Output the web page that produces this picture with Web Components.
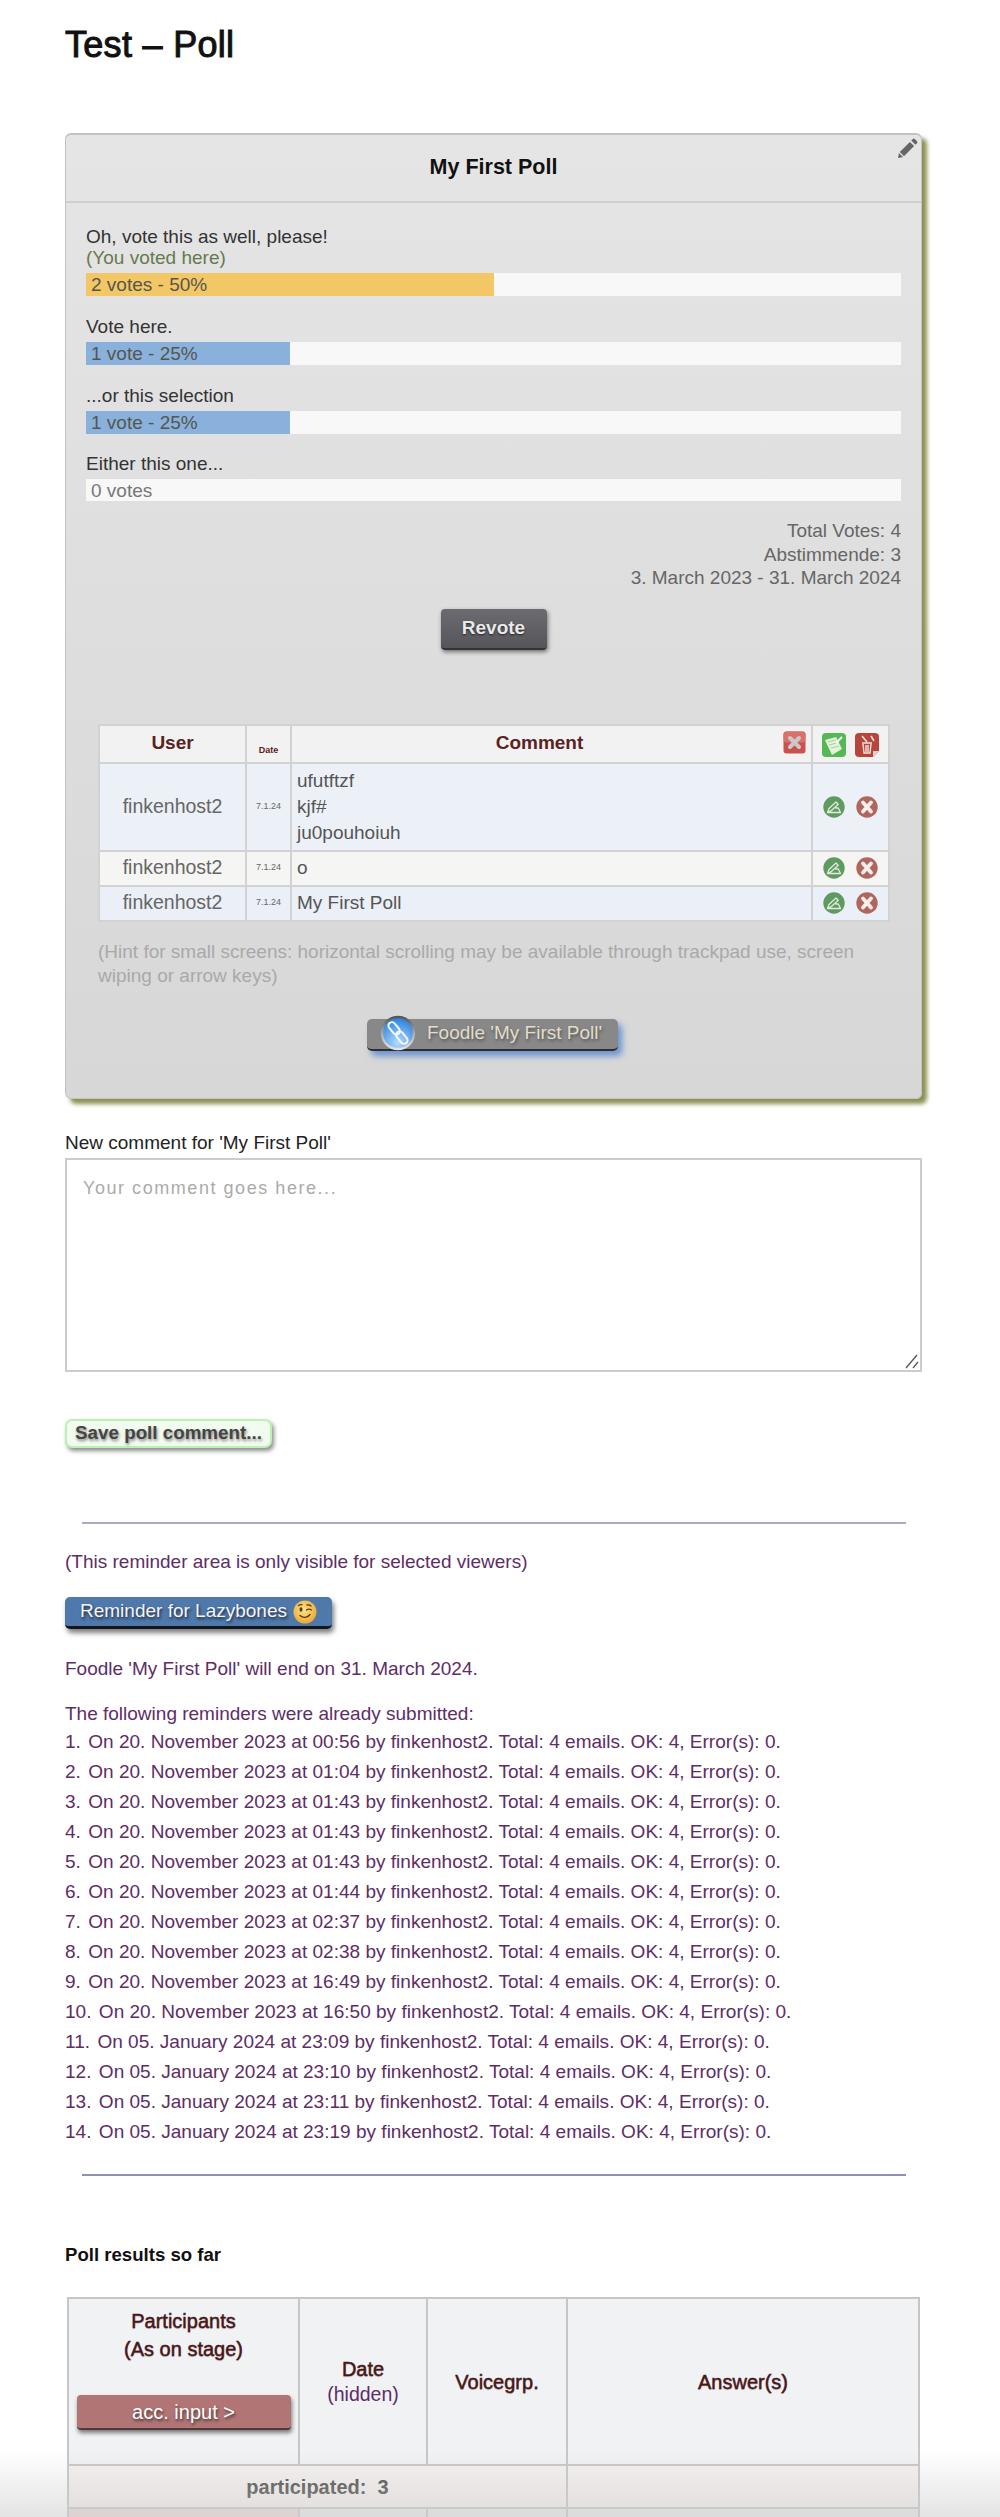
<!DOCTYPE html>
<html lang="en">
<head>
<meta charset="utf-8">
<title>Test – Poll</title>
<style>
  html, body { margin: 0; height: 2517px; overflow: hidden; background: #fff; }
  body { font: 19px/1.3 "Liberation Sans", Arial, sans-serif; color: #222; position: relative; }
  .page { padding: 0 78px 0 65px; }
  /* soft fade the browser chrome left over the bottom of the shot */
  .fade { position: absolute; left: 0; right: 0; top: 2450px; height: 67px; pointer-events: none;
    background: linear-gradient(rgba(205,205,205,0), rgba(205,205,205,.55)); }
</style>
</head>
<body>
<div class="page">
  <page-title>Test – Poll</page-title>
  <poll-card heading="My First Poll">
    <poll-option label="Oh, vote this as well, please!" note="(You voted here)" text="2 votes - 50%" pct="50" tone="gold"></poll-option>
    <poll-option label="Vote here." text="1 vote - 25%" pct="25" tone="blue"></poll-option>
    <poll-option label="...or this selection" text="1 vote - 25%" pct="25" tone="blue"></poll-option>
    <poll-option label="Either this one..." text="0 votes" pct="0" tone="none"></poll-option>
    <poll-totals></poll-totals>
    <comment-table></comment-table>
  </poll-card>
  <comment-form></comment-form>
  <reminder-area></reminder-area>
  <results-table></results-table>
</div>
<div class="fade"></div>

<script>
// small helper: every element gets its own open shadow root
function shadow(el, html) {
  el.attachShadow({ mode: "open" });
  el.shadowRoot.innerHTML = html;
}

class PageTitle extends HTMLElement {
  connectedCallback() {
    shadow(this, `<style>
      :host { display: block; height: 133px; box-sizing: border-box; padding-top: 23px; }
      h1 { margin: 0; font: normal 36px/44px "Liberation Sans", sans-serif; letter-spacing: .3px; -webkit-text-stroke: 1px #111; color: #111; }
    </style><h1><slot></slot></h1>`);
  }
}
customElements.define("page-title", PageTitle);

class GlossButton extends HTMLElement {
  connectedCallback() {
    shadow(this, `<style>
      :host { display: inline-flex; align-items: center; justify-content: center; box-sizing: border-box; white-space: nowrap; }
      :host([kind=revote]) { width: 106px; height: 41px; border-radius: 4px; color: #e9e9e9; font-weight: bold;
        background: linear-gradient(#6b6b70, #55555b); border-bottom: 2px solid #333;
        box-shadow: 1px 2px 4px rgba(0,0,0,.5); text-shadow: 0 1px 2px #222; }
      :host([kind=foodle]) { width: 251px; height: 32px; border-radius: 5px; color: #e2dccb; position: relative;
        background: #888; border-bottom: 2px solid #2e2e2e; padding-left: 60px; justify-content: flex-start;
        box-shadow: 4px 5px 6px rgba(70,125,205,.75); text-shadow: 1px 2px 3px #555; }
      :host([kind=save]) { width: 207px; height: 29px; border-radius: 7px; color: #444; font-weight: bold; font-size: 18.8px;
        background: #f1fbef; border: 2px solid #b8f3b0;
        box-shadow: 2px 3px 4px rgba(0,0,0,.45); text-shadow: 1px 2px 3px #888; }
      :host([kind=remind]) { width: 267px; height: 32px; border-radius: 5px; color: #f2f5f8;
        background: #4f79ab; border-bottom: 3px solid #13161c; padding-left: 15px; justify-content: flex-start;
        box-shadow: 2px 4px 5px rgba(0,0,0,.5); text-shadow: 1px 2px 3px #223; }
      :host([kind=accent]) { width: 214px; height: 35px; border-radius: 4px; color: #fff; font-size: 20px;
        background: #b27575; border-bottom: 2px solid #4e3a3a; -webkit-text-stroke: 0;
        box-shadow: 1px 3px 4px rgba(0,0,0,.5); text-shadow: 1px 2px 3px #433; }
    </style><slot></slot>`);
  }
}
customElements.define("gloss-button", GlossButton);

class PollCard extends HTMLElement {
  connectedCallback() {
    const heading = this.getAttribute("heading");
    shadow(this, `<style>
      :host { display: block; position: relative; box-sizing: border-box; height: 966px; border-radius: 6px;
        border: 1px solid #c2c2c2; border-top: 2px solid #c2c2c2;
        background: linear-gradient(#e5e5e5, #d7d7d7);
        box-shadow: 5px 5px 4px #8d9150; }
      header { height: 68px; box-sizing: border-box; border-bottom: 2px solid #cfcfcf; display: flex;
        align-items: center; justify-content: center; font-weight: bold; font-size: 21.5px; color: #111; }
      svg { position: absolute; right: 3px; top: 3px; }
      .body { padding: 23px 20px 0; }
    </style>
    <header>${heading}</header>
    <svg width="20" height="20" viewBox="0 0 20 20" fill="#666"><path d="M14.6 1.2a1.8 1.8 0 0 1 2.5 0l1.7 1.7a1.8 1.8 0 0 1 0 2.5l-1.4 1.4-4.2-4.2zM11.9 3.9l4.2 4.2L6 18.2l-4.2-4.2zM.9 15l4.1 4.1-4.9 1z"/></svg>
    <div class="body"><slot></slot></div>`);
  }
}
customElements.define("poll-card", PollCard);

class PollOption extends HTMLElement {
  connectedCallback() {
    const a = (n) => this.getAttribute(n);
    const note = a("note") ? `<div class="note">${a("note")}</div>` : "";
    shadow(this, `<style>
      :host { display: block; margin-bottom: 20px; }
      :host([tone=none]) { margin-top: -1px; }
      :host([tone=none]) .bar { height: 22px; }
      .label, .note { font-size: 19px; line-height: 21px; color: #333; }
      .note { color: #667a4e; }
      .bar { position: relative; height: 23px; margin-top: 5px; background: #f8f8f8; overflow: hidden; }
      .fill { height: 100%; width: ${a("pct")}%; }
      .fill.gold { background: #f4c766; }
      .fill.blue { background: #8ab1dc; }
      .txt { position: absolute; left: 5px; top: 0; line-height: 23px; font-size: 19px; white-space: nowrap;
        color: ${a("tone") === "none" ? "#777" : "#55564e"}; }
    </style>
    <div class="label">${a("label")}</div>${note}
    <div class="bar"><div class="fill ${a("tone")}"></div><span class="txt">${a("text")}</span></div>`);
  }
}
customElements.define("poll-option", PollOption);

class PollTotals extends HTMLElement {
  connectedCallback() {
    shadow(this, `<style>
      :host { display: block; text-align: right; color: #666; font-size: 19px; line-height: 23.5px; margin-top: -2px; }
      .btn { text-align: center; margin-top: 19px; color: #eee; }
    </style>
    <div>Total Votes: 4</div><div>Abstimmende: 3</div><div>3. March 2023 - 31. March 2024</div>
    <div class="btn"><gloss-button kind="revote">Revote</gloss-button></div>`);
  }
}
customElements.define("poll-totals", PollTotals);

const ICONS = {
  clear: `<svg width="23" height="23" viewBox="0 0 23 23"><rect x=".5" y=".5" width="22" height="22" rx="3" fill="#c9524c"/><rect x=".5" y=".5" width="22" height="11" rx="3" fill="#d8716b"/><path d="M7 7l9 9M16 7l-9 9" stroke="#c9c9c9" stroke-width="4" stroke-linecap="round"/></svg>`,
  accept: `<svg width="24" height="24" viewBox="0 0 24 24"><rect width="24" height="24" rx="4" fill="#54b954"/><path d="M3 7l11-3 6 12-10 6z" fill="#e4f3da"/><path d="M6 9l8-2M7 12l8-2M9 15l8-2" stroke="#a8d49a"/><path d="M14 10l6-6" stroke="#fff" stroke-width="2"/></svg>`,
  trash: `<svg width="24" height="24" viewBox="0 0 24 24"><path d="M4 0h16a4 4 0 0 1 4 4v14l-6 6H4a4 4 0 0 1-4-4V4a4 4 0 0 1 4-4z" fill="#b8453c"/><path d="M24 18l-6 6v-6z" fill="#e4d2cf"/><path d="M7 10h10M8 11l1 9h6l1-9M11 12v7M13 12v7" fill="none" stroke="#f1e3e0" stroke-width="1.4"/><path d="M7 3l5 6M16 3l3 5" stroke="#f1e3e0" stroke-width="1.6"/></svg>`,
  edit: `<svg width="22" height="22" viewBox="0 0 22 22"><circle cx="11" cy="11" r="10.7" fill="#5f9a60"/><path d="M4.5 16.5h13l-2.2-4.5h-3M4.5 16.5l1.5-4 7-6.5 2.2 2.2-7 6.5z" fill="none" stroke="#dfeadc" stroke-width="1.3" stroke-linejoin="round"/></svg>`,
  del: `<svg width="22" height="22" viewBox="0 0 22 22"><circle cx="11" cy="11" r="10.7" fill="#b0655d"/><path d="M7 6.5l8 9M15 6.5l-8 9" stroke="#f6efec" stroke-width="3.8" stroke-linecap="round"/></svg>`,
};

class CommentTable extends HTMLElement {
  connectedCallback() {
    const rows = [
      ["ufutftzf<br>kjf#<br>ju0pouhoiuh", "#ecf1f7", 88],
      ["o", "#f5f5f3", 35],
      ["My First Poll", "#ebeff7", 35],
    ];
    shadow(this, `<style>
      :host { display: block; margin: 74px 11px 0 12px; }
      table { border-collapse: collapse; width: 792px; table-layout: fixed; border: 2px solid #d2d2d2; }
      th, td { border: 2px solid #d2d2d2; padding: 0; }
      th { height: 36px; background: #f2f2f2; color: #5a2222; font-size: 19px; }
      td { color: #666; font-size: 19.5px; text-align: center; }
      .date { font-size: 9px; }
      th.date { vertical-align: bottom; height: 31px; padding-bottom: 5px; font-weight: bold; }
      td.text { text-align: left; padding-left: 5px; line-height: 26px; color: #555; font-size: 19px; }
      th.c { position: relative; padding-right: 24px; }
      th.c svg { position: absolute; right: 5px; top: 5px; }
      svg { display: block; }
      .ic { display: flex; justify-content: center; gap: 11px; align-items: center; }
      .hint { margin: 18px 0 0; color: #a9a9a9; font-size: 19px; line-height: 24px; }
      .go { text-align: center; margin-top: 31px; padding-right: 3px; }
      .g { position: absolute; left: 13px; top: -7px; }
    </style>
    <table>
      <colgroup><col style="width:147px"><col style="width:45px"><col style="width:521px"><col></colgroup>
      <tr><th>User</th><th class="date">Date</th><th class="c">Comment${ICONS.clear}</th>
        <th><div class="ic" style="gap:9px;padding-top:2px">${ICONS.accept}${ICONS.trash}</div></th></tr>
      ${rows.map(([text, bg, h]) => `<tr style="background:${bg};height:${h}px">
        <td>finkenhost2</td><td class="date">7.1.24</td><td class="text">${text}</td>
        <td><div class="ic">${ICONS.edit}${ICONS.del}</div></td></tr>`).join("")}
    </table>
    <p class="hint">(Hint for small screens: horizontal scrolling may be available through trackpad use, screen wiping or arrow keys)</p>
    <div class="go"><gloss-button kind="foodle"><svg class="g" width="38" height="42" viewBox="0 0 38 42">
      <defs>
        <radialGradient id="gl" cx=".5" cy=".8" r=".75"><stop offset="0" stop-color="#b4dcfc"/><stop offset="1" stop-color="#2b82de"/></radialGradient>
        <linearGradient id="rg" x1="0" y1="0" x2="0" y2="1"><stop offset="0" stop-color="#555"/><stop offset=".5" stop-color="#aaa"/><stop offset="1" stop-color="#e4e4e4"/></linearGradient>
      </defs>
      <circle cx="18" cy="21" r="16" fill="url(#gl)" stroke="url(#rg)" stroke-width="2.4"/>
      <g transform="rotate(50 18 21)" fill="none" stroke="#f4f8fc" stroke-width="2">
        <rect x="5" y="17.5" width="14" height="7" rx="3.5"/>
        <rect x="17" y="17.5" width="14" height="7" rx="3.5"/>
      </g>
    </svg>Foodle 'My First Poll'</gloss-button></div>`);
  }
}
customElements.define("comment-table", CommentTable);

class CommentForm extends HTMLElement {
  connectedCallback() {
    shadow(this, `<style>
      :host { display: block; padding-top: 32px; }
      label { display: block; line-height: 24px; font-size: 19px; color: #222; margin-bottom: 3px; }
      .box { position: relative; box-sizing: border-box; height: 214px; border: 2px solid #ccc; padding: 16px;
        color: #aaa; font-size: 18px; line-height: 24px; letter-spacing: 1.55px; }
      svg { position: absolute; right: 1px; bottom: 1px; }
      .save { margin-top: 47px; }
    </style>
    <label>New comment for 'My First Poll'</label>
    <div class="box">Your comment goes here...
      <svg width="16" height="16" viewBox="0 0 16 16" stroke="#555" stroke-width="1.3"><path d="M14 2L3 15M15 9l-5 6"/></svg>
    </div>
    <div class="save"><gloss-button kind="save">Save poll comment...</gloss-button></div>`);
  }
}
customElements.define("comment-form", CommentForm);

class ReminderArea extends HTMLElement {
  connectedCallback() {
    const sent = [
      "20. November 2023 at 00:56", "20. November 2023 at 01:04", "20. November 2023 at 01:43",
      "20. November 2023 at 01:43", "20. November 2023 at 01:43", "20. November 2023 at 01:44",
      "20. November 2023 at 02:37", "20. November 2023 at 02:38", "20. November 2023 at 16:49",
      "20. November 2023 at 16:50", "05. January 2024 at 23:09", "05. January 2024 at 23:10",
      "05. January 2024 at 23:11", "05. January 2024 at 23:19",
    ];
    shadow(this, `<style>
      :host { display: block; color: #5e2d66; font-size: 19px; }
      hr { border: 0; height: 2px; background: #aaaac6; margin: 74px 16px 0 17px; }
      hr.b { background: #8f8fbb; margin-top: 27px; }
      .vis { margin-top: 26px; line-height: 24px; }
      .btn { margin-top: 23px; height: 32px; }
      .end { margin-top: 28px; line-height: 24px; }
      .head { margin-top: 21px; line-height: 24px; }
      ol { list-style: none; margin: 1px 0 0; padding: 0; }
      li { line-height: 30px; white-space: nowrap; font-size: 19.05px; }
      .n { word-spacing: -1.6px; }
      svg { margin-left: 6px; flex: none; }
    </style>
    <hr>
    <div class="vis">(This reminder area is only visible for selected viewers)</div>
    <div class="btn"><gloss-button kind="remind">Reminder for Lazybones
      <svg width="24" height="24" viewBox="0 0 24 24"><defs><radialGradient id="em" cx=".45" cy=".4" r=".65"><stop offset="0" stop-color="#fde58a"/><stop offset="1" stop-color="#eda32c"/></radialGradient></defs>
        <circle cx="12" cy="12" r="11.5" fill="url(#em)"/><ellipse cx="8" cy="9.5" rx="1.5" ry="2.2" fill="#5a3a18"/>
        <path d="M13.5 10c1.5-1.2 3.2-1.2 5 0M5.5 5.5c1-.8 2-1 3.5-.8M14 5c1.5-.4 3 0 4 1M7 15.5c3 3 7.5 2.5 10-1" fill="none" stroke="#5a3a18" stroke-width="1.3" stroke-linecap="round"/></svg>
    </gloss-button></div>
    <div class="end">Foodle 'My First Poll' will end on 31. March 2024.</div>
    <div class="head">The following reminders were already submitted:</div>
    <ol>${sent.map((d, i) => `<li><span class="n">${i + 1}.&nbsp; </span>On ${d} by finkenhost2. Total: 4 emails. OK: 4, Error(s): 0.</li>`).join("")}</ol>
    <hr class="b">`);
  }
}
customElements.define("reminder-area", ReminderArea);

class ResultsTable extends HTMLElement {
  connectedCallback() {
    shadow(this, `<style>
      :host { display: block; padding-top: 67px; }
      .cap { font-weight: bold; font-size: 18.6px; line-height: 24px; color: #111; }
      table { margin: 30px 0 0 2px; border-collapse: collapse; width: 853px; table-layout: fixed; border: 2px solid #c6c6c6; }
      th, td { border: 2px solid #c6c6c6; padding: 0; text-align: center; font-size: 20px; }
      th { background: #f1f2f4; color: #4a1518; font-weight: normal; height: 165px; -webkit-text-stroke: .45px #4a1518; text-shadow: 0 1px 1px #bbb; }
      th small { display: block; font-size: 19.5px; color: #5e2d66; line-height: 26px; -webkit-text-stroke: 0; text-shadow: none; }
      .d { line-height: 24px; }
      .p { vertical-align: top; height: 157px; padding-top: 8px; line-height: 28px; }
      .pb { margin-top: 32px; -webkit-text-stroke: 0; line-height: 0; }
      td.sum { background: #f6f1ef; height: 41px; color: #444; font-weight: bold; }
      td.pink { background: #eed9d9; height: 41px; } td.grey { background: #ececec; }
    </style>
    <div class="cap">Poll results so far</div>
    <table>
      <colgroup><col style="width:231px"><col style="width:128px"><col style="width:140px"><col></colgroup>
      <tr><th class="p">Participants<br>(As on stage)<div class="pb"><gloss-button kind="accent">acc. input &gt;</gloss-button></div></th>
        <th class="d">Date<small>(hidden)</small></th><th>Voicegrp.</th><th>Answer(s)</th></tr>
      <tr><td class="sum" colspan="3">participated:&nbsp; 3</td><td class="sum"></td></tr>
      <tr><td class="pink"></td><td class="grey"></td><td class="grey"></td><td class="grey"></td></tr>
    </table>`);
  }
}
customElements.define("results-table", ResultsTable);
</script>
</body>
</html>
